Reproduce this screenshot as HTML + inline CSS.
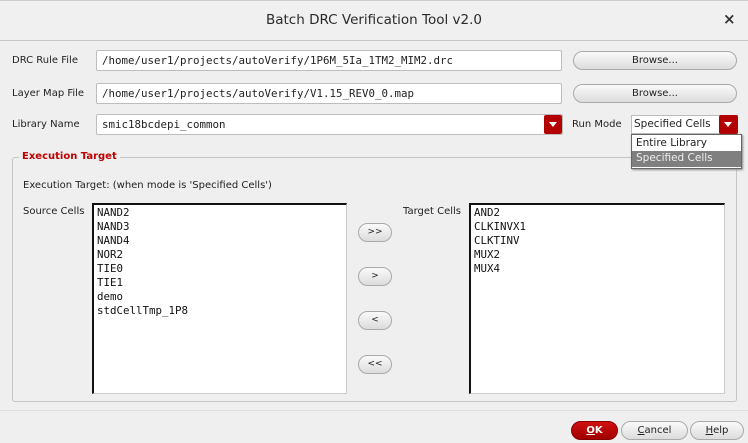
<!DOCTYPE html>
<html><head><style>
*{box-sizing:border-box;margin:0;padding:0}
body{width:748px;height:443px;background:#efefef;font-family:"DejaVu Sans","Liberation Sans",sans-serif;font-size:10px;color:#222;position:relative;overflow:hidden}
.a{position:absolute;white-space:nowrap}
.title{left:0;top:0;width:748px;height:41px;background:#f0f0f0;border-bottom:1px solid #c8c8c8;border-top:1px solid #ccc;text-align:center;line-height:38px;font-size:13.5px;color:#2a2a2a}
.inp{background:#fff;border:1px solid #bdbdbd;border-radius:2px;font-family:"DejaVu Sans Mono","Liberation Mono",monospace;font-size:10.8px;padding-left:5px;line-height:19px}
.btn{background:linear-gradient(#fafafa,#dcdcdc);border:1px solid #a9a9a9;border-radius:10px;text-align:center;font-size:10px}
.arr{background:#b30000;border-radius:2px}
.arr:after{content:"";position:absolute;left:5px;top:7px;border-left:4px solid transparent;border-right:4px solid transparent;border-top:5px solid #fff}
.list{background:#fff;border-top:2px solid #111;border-left:2px solid #111;border-right:1px solid #ccc;border-bottom:1px solid #ccc;font-family:"DejaVu Sans Mono","Liberation Mono",monospace;font-size:10.8px;line-height:14px;padding:1px 0 0 3px;color:#111}
</style></head><body>
<div class="a title">Batch DRC Verification Tool v2.0</div>
<div class="a" style="left:723px;top:10px;font-size:15px;font-weight:bold;color:#333">×</div>

<div class="a" style="left:12px;top:55px">DRC Rule File</div>
<div class="a inp" style="left:96px;top:50px;width:466px;height:21px">/home/user1/projects/autoVerify/1P6M_5Ia_1TM2_MIM2.drc</div>
<div class="a btn" style="left:573px;top:51px;width:164px;height:19px;line-height:17px">Browse...</div>

<div class="a" style="left:12px;top:88px">Layer Map File</div>
<div class="a inp" style="left:96px;top:83px;width:466px;height:21px">/home/user1/projects/autoVerify/V1.15_REV0_0.map</div>
<div class="a btn" style="left:573px;top:84px;width:164px;height:19px;line-height:17px">Browse...</div>

<div class="a" style="left:12px;top:119px">Library Name</div>
<div class="a inp" style="left:96px;top:114px;width:467px;height:21px">smic18bcdepi_common</div>
<div class="a arr" style="left:544px;top:115px;width:18px;height:19px"></div>
<div class="a" style="left:572px;top:119px">Run Mode</div>
<div class="a" style="left:631px;top:115px;width:107px;height:19px;background:#fff;border:1px solid #bbb;padding-left:2px;line-height:17px;font-size:10.5px">Specified Cells</div>
<div class="a arr" style="left:719px;top:115px;width:19px;height:19px"></div>

<div class="a" style="left:12px;top:157px;width:725px;height:245px;border:1px solid #c4c4c4;border-radius:3px"></div>
<div class="a" style="left:19px;top:151px;background:#efefef;padding:0 3px;color:#c00000;font-weight:bold;font-size:10px">Execution Target</div>

<div class="a" style="left:631px;top:134px;width:111px;height:35px;background:#fff;border:1px solid #666;box-shadow:1px 1px 2px #888"></div>
<div class="a" style="left:636px;top:137px;font-size:10.5px">Entire Library</div>
<div class="a" style="left:632px;top:151px;width:109px;height:16px;background:#7f7f7f;color:#eee;padding-left:4px;line-height:15px;font-size:10.5px">Specified Cells</div>

<div class="a" style="left:23px;top:180px">Execution Target: (when mode is 'Specified Cells')</div>
<div class="a" style="left:23px;top:206px">Source Cells</div>
<div class="a list" style="left:92px;top:203px;width:255px;height:191px">NAND2<br>NAND3<br>NAND4<br>NOR2<br>TIE0<br>TIE1<br>demo<br>stdCellTmp_1P8</div>
<div class="a btn" style="left:358px;top:223px;width:34px;height:19px;line-height:17px;font-size:9px">&gt;&gt;</div>
<div class="a btn" style="left:358px;top:267px;width:34px;height:19px;line-height:17px;font-size:9px">&gt;</div>
<div class="a btn" style="left:358px;top:311px;width:34px;height:19px;line-height:17px;font-size:9px">&lt;</div>
<div class="a btn" style="left:358px;top:355px;width:34px;height:19px;line-height:17px;font-size:9px">&lt;&lt;</div>
<div class="a" style="left:403px;top:206px">Target Cells</div>
<div class="a list" style="left:469px;top:203px;width:256px;height:191px">AND2<br>CLKINVX1<br>CLKTINV<br>MUX2<br>MUX4</div>

<div class="a" style="left:0;top:410px;width:748px;height:1px;background:#ddd"></div>
<div class="a btn" style="left:571px;top:421px;width:47px;height:19px;line-height:17px;background:linear-gradient(#d01010,#a00000);border-color:#800;color:#fff;font-weight:bold"><u>O</u>K</div>
<div class="a btn" style="left:621px;top:421px;width:67px;height:19px;line-height:17px"><u>C</u>ancel</div>
<div class="a btn" style="left:690px;top:421px;width:54px;height:19px;line-height:17px"><u>H</u>elp</div>
</body></html>
